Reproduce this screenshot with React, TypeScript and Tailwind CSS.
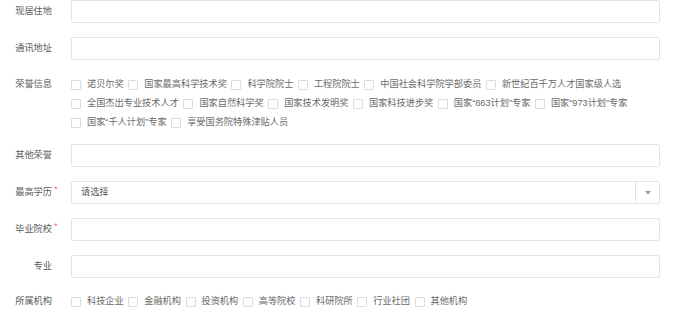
import React from 'react';

const honors = [
  '诺贝尔奖',
  '国家最高科学技术奖',
  '科学院院士',
  '工程院院士',
  '中国社会科学院学部委员',
  '新世纪百千万人才国家级人选',
  '全国杰出专业技术人才',
  '国家自然科学奖',
  '国家技术发明奖',
  '国家科技进步奖',
  '国家“863计划”专家',
  '国家“973计划”专家',
  '国家“千人计划”专家',
  '享受国务院特殊津贴人员',
];

const orgs = ['科技企业', '金融机构', '投资机构', '高等院校', '科研院所', '行业社团', '其他机构'];

const Label = ({ text, required }: { text: string; required?: boolean }) => (
  <div className="relative w-[71px] shrink-0 pr-[19px] text-right text-[#5a5a5a]">
    {text}
    {required && <span className="absolute left-[54px] top-[-3px] text-[#f56c6c]">*</span>}
  </div>
);

const TextInput = () => (
  <input
    type="text"
    className="h-[23px] min-w-0 flex-1 rounded-[2px] border border-[#e4e4e4] bg-white px-[9px] outline-none"
  />
);

const Check = ({ text }: { text: string }) => (
  <label className="mr-[4.5px] flex h-[19px] items-center text-[#6a6a6a]">
    <span className="h-[10px] w-[10px] shrink-0 rounded-[1px] border border-[#dcdcdc] bg-white" />
    <span className="ml-[6px] whitespace-nowrap">{text}</span>
  </label>
);

export default function App() {
  return (
    <div
      className="w-[682px] bg-white pr-[22px] text-[9.2px] leading-none"
      style={{ fontFamily: '"Liberation Sans", "Noto Sans CJK SC", sans-serif' }}
    >
      <div className="mb-[14px] flex h-[23px] items-center">
        <Label text="现居住地" />
        <TextInput />
      </div>

      <div className="mb-[15px] flex h-[23px] items-center">
        <Label text="通讯地址" />
        <TextInput />
      </div>

      <div className="mb-[12px] flex items-start">
        <div className="flex h-[19px] items-center">
          <Label text="荣誉信息" />
        </div>
        <div className="flex flex-1 flex-wrap">
          {honors.map((h) => (
            <Check key={h} text={h} />
          ))}
        </div>
      </div>

      <div className="mb-[14px] flex h-[23px] items-center">
        <Label text="其他荣誉" />
        <TextInput />
      </div>

      <div className="mb-[14px] flex h-[23px] items-center">
        <Label text="最高学历" required />
        <div className="flex h-[23px] flex-1 items-center rounded-[2px] border border-[#e4e4e4] bg-white">
          <span className="flex-1 pl-[9px] text-[#555]">请选择</span>
          <span className="flex h-full w-[24px] items-center justify-center border-l border-[#e4e4e4]">
            <svg width="6" height="4" viewBox="0 0 6 4">
              <path d="M0 0h6L3 3.5z" fill="#999" />
            </svg>
          </span>
        </div>
      </div>

      <div className="mb-[14px] flex h-[23px] items-center">
        <Label text="毕业院校" required />
        <TextInput />
      </div>

      <div className="mb-[14px] flex h-[23px] items-center">
        <Label text="专业" />
        <TextInput />
      </div>

      <div className="flex h-[19px] items-center">
        <Label text="所属机构" />
        <div className="flex flex-1 flex-wrap">
          {orgs.map((o) => (
            <Check key={o} text={o} />
          ))}
        </div>
      </div>
    </div>
  );
}
